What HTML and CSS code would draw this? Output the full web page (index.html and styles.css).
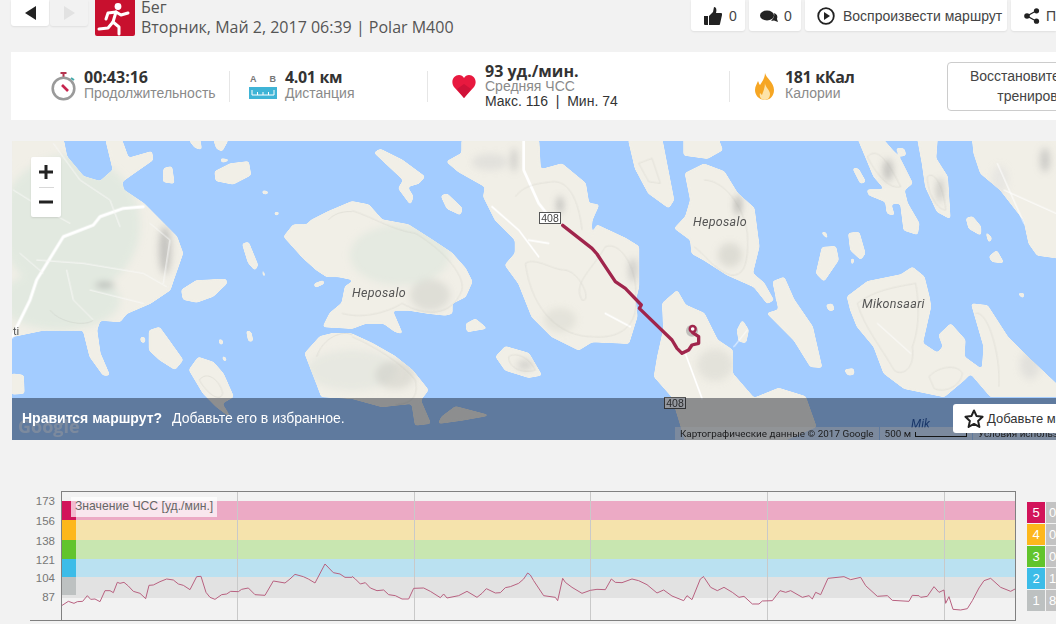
FILE: index.html
```html
<!DOCTYPE html>
<html lang="ru">
<head>
<meta charset="utf-8">
<title>Бег</title>
<link rel="stylesheet" href="styles.css">
</head>
<body>
<header class="top">
  <div class="pager">
    <button class="pager-btn"><svg width="11" height="14" viewBox="0 0 11 14"><path d="M11 0v14L0 7z" fill="#222"/></svg></button>
    <button class="pager-btn pager-off"><svg width="11" height="14" viewBox="0 0 11 14"><path d="M0 0v14l11-7z" fill="#e2e2e2"/></svg></button>
  </div>
  <div class="sport">
    <svg width="40" height="36" viewBox="0 0 40 36"><circle cx="23" cy="6.500" r="3.400" fill="#fff"/><g fill="none" stroke="#fff" stroke-width="3" stroke-linejoin="round" stroke-linecap="round"><path d="M21 12l-3 10 6 5v7"/><path d="M18 22l-5 6-9 1"/><path d="M11 19l2-6 8-1 5 3 7-2"/></g></svg>
  </div>
  <div class="title">
    <div>Бег</div>
    <div>Вторник, Май 2, 2017 06:39 | Polar M400</div>
  </div>
  <div class="actions">
    <button class="act act-like"><svg width="18" height="18" viewBox="0 0 18 18"><path d="M0 9h4v9H1a1 1 0 0 1-1-1zM5 9l4-4 1-5c2 0 3 2 2 6h5c1 0 1.500 1 1 2l-2 9c0 .6-.6 1-1 1H5z" fill="#222"/></svg>0</button>
    <button class="act act-comment"><svg width="18" height="12" viewBox="0 0 18 12"><ellipse cx="7" cy="5.500" rx="7" ry="5" fill="#222"/><path d="M14 3c3 1 4 3 3 6l1 3-4-1.500-3 .5c2-2 4-5 3-8z" fill="#222"/></svg>0</button>
    <button class="act act-play"><svg width="18" height="18" viewBox="0 0 18 18"><circle cx="9" cy="9" r="7.800" fill="none" stroke="#222" stroke-width="1.800"/><path d="M7 5l6 4-6 4z" fill="#222"/></svg>Воспроизвести маршрут</button>
    <button class="act act-share"><svg width="16" height="16" viewBox="0 0 16 16"><g fill="#222"><circle cx="3" cy="8" r="2.800"/><circle cx="12.500" cy="2.800" r="2.600"/><circle cx="12.500" cy="13.200" r="2.600"/></g><path d="M12.500 2.800L3 8l9.500 5.200" fill="none" stroke="#222" stroke-width="1.300"/></svg>Поделиться</button>
  </div>
</header>

<section class="stats">
  <div class="stat stat-time">
    <svg class="ico" width="25" height="29" viewBox="0 0 25 29"><rect x="9.500" y="0" width="6" height="2" fill="#b5344f"/><rect x="11.500" y="2" width="2" height="3" fill="#b5344f"/><circle cx="12.500" cy="16.500" r="10.800" fill="#fff" stroke="#9a9a9a" stroke-width="2.600"/><path d="M20 6l3 2" stroke="#4aa" stroke-width="2"/><path d="M11 13l6 6" stroke="#c7254e" stroke-width="2.600"/></svg>
    <div class="stat-text"><div class="big">00:43:16</div><div class="sub">Продолжительность</div></div>
  </div>
  <div class="stat stat-dist">
    <div class="ruler-wrap">
      <div class="ab"><span>A</span><span>B</span></div>
      <svg width="28" height="12" viewBox="0 0 28 12"><rect width="28" height="12" fill="#3fb4d6"/><path d="M3 3v5h22V3M8.500 5v3M14 5v3M19.500 5v3" fill="none" stroke="#fff" stroke-width="1"/></svg>
    </div>
    <div class="stat-text"><div class="big">4.01 км</div><div class="sub">Дистанция</div></div>
  </div>
  <div class="stat stat-hr">
    <svg class="ico" width="24" height="23" viewBox="0 0 24 23"><path d="M12 23L2 12C-2 6 2 0 7 0c2 0 4 1 5 3 1-2 3-3 5-3 5 0 9 6 5 12z" fill="#e8193f"/><path d="M12 23L5 14l7-5 7 5z" fill="#cf1238"/></svg>
    <div class="hr-text"><div class="big">93 уд./мин.</div><div class="sub">Средняя ЧСС</div><div class="minmax">Макс. 116 &nbsp;|&nbsp; Мин. 74</div></div>
  </div>
  <div class="stat stat-cal">
    <svg class="ico" width="21" height="27" viewBox="0 0 21 27"><path d="M11 0c1 5 9 9 9 17 0 6-4 10-9 10S1 23 1 17c0-4 2-6 3-9 1 2 1 3 2 4 2-3 5-7 5-12z" fill="#f6a623"/><path d="M11 10c0 4 5 7 5 11 0 3-2 6-5 6-4 0-6-3-5-7 1 1 2 2 2 2 1-3 3-7 3-12z" fill="#fde3a8"/></svg>
    <div class="stat-text"><div class="big">181 кКал</div><div class="sub">Калории</div></div>
  </div>
  <button class="restore">Восстановите карту<br>тренировки</button>
</section>

<section class="map">
  <svg class="map-art" width="1044" height="299" viewBox="12 141 1044 299">
    <defs>
      <filter id="soft" x="-2%" y="-2%" width="104%" height="104%" color-interpolation-filters="sRGB"><feGaussianBlur stdDeviation="1.500"/><feColorMatrix values="1 0 0 0 0 0 1 0 0 0 0 0 1 0 0 0 0 0 7 -3"/><feGaussianBlur stdDeviation=".4"/></filter>
      <filter id="hill" x="-50%" y="-50%" width="200%" height="200%"><feGaussianBlur stdDeviation="3.500"/></filter>
      <g id="land" stroke-width="4" stroke-linejoin="round">
      <g transform="translate(0 140) scale(.33333)">
        <path d="M36 0H190L200 50 250 110 300 125 340 90 330 50 318 0H365L385 55 455 35 458 60 400 100 365 125 370 150 430 190 480 240 530 290 548 340 520 420 510 450 450 490 380 520 360 545 300 540 290 570 300 640 328 705 310 705 270 650 250 570 130 570 36 590z"/>
        <path d="M492 85L515 80 522 130 490 125z"/>
        <path d="M645 95L690 72 745 65 752 105 700 132 648 122z"/>
        <path d="M788 152L805 156 800 162 788 160z"/>
        <path d="M824 218L836 216 834 225 824 224z"/>
        <path d="M728 312L745 307 773 375 765 390 745 368z"/>
        <path d="M787 388L796 408 790 408z"/>
        <path d="M545 450L590 422 678 418 680 430 640 468 590 486 550 478z"/>
        <path d="M943 432L970 422 972 430 946 442z"/>
        <path d="M448 572L478 562 500 592 548 660 525 688 480 660 448 630z"/>
        <path d="M422 592L434 592 434 608 424 606z"/>
        <path d="M740 572L753 577 758 603 746 603z"/>
        <path d="M657 597L668 602 667 613 660 612z"/>
        <path d="M668 648L678 655 678 664 670 660z"/>
        <path d="M568 690L595 652 640 667 670 702 700 770 665 790 690 830 650 800 610 760z"/>
        <path d="M36 702L70 706 72 760 36 762z"/>
        <path d="M568 0H600L604 28 585 22z"/>
        <path d="M642 0H684L666 33 650 25z"/>
        <path d="M662 56L688 60 666 67z"/>
      </g>
      <g transform="translate(352 140) scale(.33333)">
        <path d="M-204 290L-176 255-136 255-121 240-71 215 0 185 50 195 90 240 170 255 240 300 300 340 340 385 360 425 340 470 300 490 300 520 280 525 230 520 170 510 120 510 150 580 130 575 95 550 40 550 0 565-86 560-66 520-30 490-20 440 10 420-40 410-75 410-106 390-150 350z"/>
        <path d="M0 582L60 610 130 650 180 690 228 750 205 780 235 850 190 855 180 790 90 800 0 775-91 770-106 730-141 640-96 590-56 580z"/>
        <path d="M270 830L310 800 410 826 330 840 260 850z"/>
        <path d="M68 38L85 28 150 60 218 110 200 130 165 140 183 170 175 192 140 145 155 120z"/>
        <path d="M268 168L285 162 330 205 325 224 285 205z"/>
        <path d="M330 0H560L565 90 630 72 700 130 710 190 740 195 720 240 715 295 735 255 820 295 860 320 860 440 850 480 855 530 830 610 720 605 680 630 600 590 540 530 500 430 460 375 490 340 490 300 430 240 395 170 400 140 320 95 285 65 330 40z"/>
        <path d="M342 552L370 537 403 565 346 575z"/>
        <path d="M432 650L460 620 530 640 568 705 530 712 460 690z"/>
        <path d="M932 490L975 452 1000 495 1056 520 1096 600 1141 630 1141 700 1206 775 1280 745 1360 770 1392 860 1300 900 1000 900 960 770 907 710 917 650 935 570z"/>
        <path d="M830 0H930L965 180 950 203 890 160 850 85z"/>
      </g>
      <g transform="translate(704 140) scale(.33333)">
        <path d="M-60 -10H40L55 30 10 55-60 45z"/>
        <path d="M-56 100L0 72 60 95 100 160 150 205 165 320 145 400 180 430 208 480 190 490 150 440 70 405 0 360-36 340-40 300-88 265-55 230-40 180z"/>
        <path d="M207 425L240 412 270 480 325 560 353 682 320 680 270 600 220 550 190 520 225 510z"/>
        <path d="M100 570L115 542 133 570 125 608 105 603z"/>
        <path d="M337 400L355 322 395 320 403 360 360 423z"/>
        <path d="M434 280L465 277 483 340 470 358 440 330z"/>
        <path d="M352 277L365 277 371 296z"/>
        <path d="M441 357L450 357 445 376z"/>
        <path d="M367 495L385 492 390 510 375 511z"/>
        <path d="M422 690L448 686 450 703 432 705z"/>
        <path d="M460 -10H530L590 60 625 130 600 150 610 190 645 250 640 283 600 270 590 190 560 190 570 225 550 220 545 185 495 165 490 150 545 150 510 110z"/>
        <path d="M447 85L463 87 484 125 470 130z"/>
        <path d="M577 25L600 27 605 45 590 48z"/>
        <path d="M640 -10H700L695 55 730 110 738 235 700 215 665 140 655 70z"/>
        <path d="M805 -10H1070V355L1000 345 975 310 960 240 890 150 830 100 810 40z"/>
        <path d="M787 235L805 230 830 260 830 285 795 265z"/>
        <path d="M846 277L863 295 855 307z"/>
        <path d="M862 345L878 332 898 368 865 365 856 350z"/>
        <path d="M942 460L960 460 957 474z"/>
        <path d="M430 470L490 425 590 405 625 382 660 410 675 470 680 500 655 610 700 640 718 620 705 585 740 552 783 600 780 650 835 690 840 620 803 492 850 497 910 590 980 660 1070 745 1070 770 860 770 800 700 780 720 720 770 600 745 540 700 510 620 460 560 440 510z"/>
      </g>
      </g>
      <mask id="landmask" maskUnits="userSpaceOnUse" x="12" y="141" width="1044" height="299"><use href="#land" fill="#fff" stroke="#fff"/></mask>
    </defs>
    <rect x="12" y="141" width="1044" height="299" fill="#a3ccff"/>
    <use href="#land" fill="#f1efe7" stroke="#f1efe7" filter="url(#soft)"/>
    <g mask="url(#landmask)">
    <g filter="url(#hill)">
      <ellipse cx="70" cy="225" rx="70" ry="70" fill="#e2e9e0"/>
      <ellipse cx="60" cy="300" rx="60" ry="30" fill="#e2e9e0"/>
      <ellipse cx="165" cy="250" rx="6" ry="24" fill="#999" opacity=".5"/>
      <ellipse cx="105" cy="285" rx="10" ry="3" fill="#888" opacity=".5"/>
      <ellipse cx="400" cy="255" rx="50" ry="30" fill="#e3e9e0" opacity=".9"/>
      <ellipse cx="430" cy="295" rx="20" ry="16" fill="#c4c6be" opacity=".4"/>
      <ellipse cx="352" cy="370" rx="45" ry="20" fill="#e3e6de" opacity=".7"/>
      <ellipse cx="395" cy="375" rx="20" ry="14" fill="#c4c4bc" opacity=".4"/>
      <ellipse cx="560" cy="205" rx="3" ry="9" fill="#999" opacity=".6"/>
      <ellipse cx="490" cy="162" rx="18" ry="8" fill="#ccc" opacity=".4"/>
      <ellipse cx="514" cy="160" rx="3" ry="12" fill="#aaa" opacity=".5"/>
      <ellipse cx="633" cy="270" rx="4" ry="12" fill="#aaa" opacity=".5"/>
      <ellipse cx="560" cy="320" rx="16" ry="12" fill="#d5d5cd" opacity=".45"/>
      <ellipse cx="525" cy="365" rx="8" ry="5" fill="#aaa" opacity=".4"/>
      <ellipse cx="738" cy="205" rx="3" ry="10" fill="#888" opacity=".6"/>
      <ellipse cx="730" cy="255" rx="12" ry="12" fill="#c0c0b8" opacity=".4"/>
      <ellipse cx="888" cy="170" rx="5" ry="11" fill="#999" opacity=".5"/>
      <ellipse cx="940" cy="190" rx="3" ry="12" fill="#999" opacity=".5"/>
      <ellipse cx="1045" cy="160" rx="5" ry="12" fill="#aaa" opacity=".5"/>
      <ellipse cx="1000" cy="180" rx="8" ry="14" fill="#ddd" opacity=".5"/>
      <ellipse cx="715" cy="365" rx="18" ry="16" fill="#d0d0c8" opacity=".4"/>
      <ellipse cx="1030" cy="365" rx="10" ry="14" fill="#ccc" opacity=".4"/>
    </g>
    </g>
    <g fill="none" stroke="#fff" stroke-linecap="round" stroke-linejoin="round">
      <g transform="translate(0 140) scale(.33333)">
        <path d="M36 590L90 480 110 420 190 290 280 255 300 230 370 205 430 200" stroke-width="9"/>
        <path d="M160 10L240 120 330 180 360 260M110 360L250 370 430 400 500 440M200 390L220 480 280 540M270 450L430 490M40 150L120 200 210 250M60 340L130 400M450 250L510 300 490 430" stroke-width="3" stroke="#f8f8f6"/>
      </g>
      <g transform="translate(352 140) scale(.33333)">
        <path d="M515 0L515 90 560 190 600 240" stroke-width="8"/>
        <path d="M420 200L500 270 560 350M530 300L590 310M760 520L835 560M1000 640L1050 775" stroke-width="5"/>
      </g>
      <g transform="translate(704 140) scale(.33333)">
        <path d="M90 620L130 570M880 70L960 250M900 150L1056 220M520 550L620 640" stroke-width="3"/>
      </g>
    </g>
    <g fill="none" stroke="#a8a89e" stroke-width=".7" opacity=".8">
      <g transform="translate(352 140) scale(.33333)">
        <path d="M0 212C60 230 120 270 190 280 260 320 340 400 330 450 300 530 220 530 150 490 120 510 40 540-30 520"/>
        <path d="M0 590C70 620 150 670 190 720 200 770 180 790 130 795"/>
        <path d="M520 370C550 350 600 390 640 390 690 400 720 490 690 480 660 430 720 390 760 320 810 300 860 400 850 470 860 530 830 600 720 590 630 590 540 520 520 370z"/>
        <path d="M490 170C520 130 570 130 600 125 650 120 680 180 690 270"/>
        <path d="M860 70L900 55 925 130 890 125z"/>
        <path d="M470 650C490 635 530 650 550 690 520 700 470 690 470 650z"/>
      </g>
      <g transform="translate(704 140) scale(.33333)">
        <path d="M0 120C60 120 120 200 130 280 135 370 120 410 80 405 30 390 0 340-30 320"/>
        <path d="M460 490C510 450 580 440 635 430 650 520 640 580 625 620 635 690 590 710 570 690 530 620 480 560 460 490z"/>
        <path d="M675 710C700 680 760 670 775 700 770 740 720 760 690 745z"/>
        <path d="M815 520C850 510 890 640 885 740"/>
        <path d="M490 50C520 20 550 60 590 140 550 150 510 90 490 50zM670 110C690 90 720 140 725 210 700 210 670 160 670 110z"/>
      </g>
      <g transform="translate(0 140) scale(.33333)">
        <path d="M985 240C1010 210 1056 215 1056 215M950 650C970 590 1030 570 1056 585M598 720C620 690 660 720 668 760 660 790 620 760 598 720zM150 510C180 550 260 560 280 540"/>
      </g>
    </g>
    <g transform="translate(352 140) scale(.33333)" fill="none" stroke="#a0254c" stroke-linejoin="round" stroke-linecap="round">
      <circle cx="1020" cy="572" r="18" fill="#999" stroke="none" opacity=".55"/>
      <path d="M632 256L720 325 735 342 750 365 790 425 820 445 868 495 862 505 960 600 975 625 990 640 1010 630 1020 615 1040 610 1040 590 1022 578" stroke-width="10"/>
      <circle cx="1022" cy="567" r="9" fill="#fff" stroke-width="7"/>
    </g>
    <g class="shield">
      <rect x="539.500" y="212.500" width="21" height="11"/>
      <rect x="664.500" y="397.500" width="21" height="11"/>
    </g>
    <text class="shield-num" x="550" y="221.500">408</text>
    <text class="shield-num" x="675" y="406.500">408</text>
    <text class="place" x="352" y="297">Heposalo</text>
    <text class="place" x="693" y="226">Heposalo</text>
    <text class="place" x="862" y="308">Mikonsaari</text>
    <text class="place-edge" x="13" y="335">ti</text>
    <text class="water" x="911" y="428">Mik</text>
    <text class="gg" x="18" y="433">Google</text>
  </svg>
  <div class="zoom">
    <button class="zoom-btn"><svg width="14" height="14" viewBox="0 0 14 14"><path d="M5.500 0h3v5.500H14v3H8.500V14h-3V8.500H0v-3h5.500z" fill="#222"/></svg></button>
    <span class="zoom-sep"></span>
    <button class="zoom-btn"><svg width="14" height="14" viewBox="0 0 14 14"><path d="M0 5.500h14v3H0z" fill="#222"/></svg></button>
  </div>
  <div class="attrib">
    <span class="attrib-item">Картографические данные © 2017 Google</span>
    <span class="attrib-item scale">500 м<i class="scale-bar"></i></span>
    <span class="attrib-item">Условия использования</span>
  </div>
  <div class="tint"></div>
  <div class="cta">
    <b>Нравится маршрут?</b><span>Добавьте его в избранное.</span>
  </div>
  <button class="fav"><svg width="20" height="19" viewBox="0 0 20 19"><path d="M10 1.500l2.600 5.600 6 .7-4.500 4.100 1.300 6L10 14.900l-5.400 3 1.300-6L1.400 7.800l6-.7z" fill="none" stroke="#222" stroke-width="2" stroke-linejoin="round"/></svg><span class="fav-text">Добавьте маршрут</span></button>
</section>

<section class="chart">
  <div class="yaxis">
    <span class="y y1">173</span><span class="y y2">156</span><span class="y y3">138</span><span class="y y1">121</span><span class="y y4">104</span><span class="y y1">87</span>
  </div>
  <div class="plot">
    <div class="band b5"><i class="sw"></i></div>
    <div class="band b4"><i class="sw"></i></div>
    <div class="band b3"><i class="sw"></i></div>
    <div class="band b2"><i class="sw"></i></div>
    <div class="band b1"><i class="sw"></i></div>
    <svg class="plot-art" width="953" height="128" viewBox="62 492 953 128">
      <path d="M237.500 492V620M414.500 492V620M590.500 492V620M767.500 492V620M944.500 492V620" stroke="#c9c9c9" stroke-width="1" fill="none"/>
      <g fill="none" stroke="#b8607f" stroke-width="3" stroke-linejoin="round">
        <path transform="translate(0 484) scale(.33333)" d="M185 365L205 352 222 358 232 353 248 352 262 335 272 346 285 345 300 353 315 320 330 320 340 326 352 295 360 298 372 295 385 306 400 322 420 328 437 344 447 304 460 303 480 293 500 285 520 288 535 300 550 304 570 317 590 278 603 277 618 325 630 340 645 346 665 332 680 330 692 322 715 323 725 316 745 312 765 332 795 334 820 291 855 297 870 285 885 271 910 278 925 285 945 297 975 240 1000 266 1020 270 1035 280 1056 280"/>
        <path transform="translate(352 484) scale(.33333)" d="M0 277L10 285 25 300 40 296 55 312 75 320 95 318 110 332 130 335 150 345 170 345 185 313 215 312 235 322 265 341 275 330 285 342 320 335 345 322 375 340 390 328 403 314 430 327 445 326 460 311 475 308 500 298 515 285 527 267 535 273 545 290 575 335 610 340 617 350 632 283 640 295 660 310 690 328 715 319 735 316 760 317 778 285 790 295 810 296 840 285 860 290 885 302 915 327 935 318 960 336 995 350 1005 335 1020 347 1045 285 1056 277"/>
        <path transform="translate(704 484) scale(.33333)" d="M0 280L20 310 40 320 60 310 85 325 105 340 120 337 145 360 165 360 175 351 205 350 228 320 245 325 260 320 295 340 315 335 325 345 335 325 350 332 372 283 420 278 440 287 470 280 485 305 520 337 550 335 565 349 615 352 625 334 645 335 650 340 670 337 690 308 705 325 720 318 725 358 735 338 747 376 770 378 790 374 805 350 825 312 840 290 860 283 890 310 920 322 935 314"/>
      </g>
    </svg>
    <div class="plot-label">Значение ЧСС [уд./мин.]</div>
  </div>
  <div class="legend">
    <span class="key k5">5</span><span class="val">0%</span>
    <span class="key k4">4</span><span class="val">0%</span>
    <span class="key k3">3</span><span class="val">0%</span>
    <span class="key k2">2</span><span class="val">12%</span>
    <span class="key k1">1</span><span class="val">85%</span>
  </div>
</section>
</body>
</html>
```
FILE: styles.css
```css
* { box-sizing: border-box; }
html, body { margin: 0; height: 624px; overflow: hidden; }
body { width: 1056px; background: #f2f2f2; font-family: "Liberation Sans", Arial, sans-serif; color: #333; }
button { font: inherit; border: 0; padding: 0; background: none; color: inherit; }

.top { display: flex; align-items: flex-start; height: 52px; padding-left: 11px; }
.pager { display: flex; gap: 1px; height: 26px; }
.pager-btn { width: 38px; height: 26px; background: #fff; border-radius: 0 0 3px 3px; display: flex; align-items: center; justify-content: center; box-shadow: 0 1px 2px rgba(0,0,0,.08); }
.pager-off { background: #f2f2f2; }
.sport { width: 40px; height: 36px; margin-left: 7px; background: #c8102e; border-radius: 0 0 2px 2px; }
.title { margin: -3px 0 0 6px; font: 16px/20px "Open Sans", sans-serif; color: #555; }
.actions { margin-left: auto; display: flex; gap: 4px; width: 365px; flex: none; }
.act { flex: none; height: 31px; background: #fff; border-radius: 0 0 3px 3px; display: flex; align-items: center; box-shadow: 0 1px 2px rgba(0,0,0,.08); font: 14px "Liberation Sans", sans-serif; color: #444; white-space: nowrap; }
.act svg { flex: none; }
.act-like { width: 54px; padding-left: 13px; gap: 7px; }
.act-comment { width: 52px; padding-left: 11px; gap: 6px; }
.act-play { width: 202px; padding-left: 12px; gap: 8px; }
.act-share { width: 45px; padding-left: 13px; gap: 6px; overflow: hidden; border-radius: 0 0 0 3px; }

.stats { margin-left: 11px; width: 1045px; height: 68px; background: #fff; display: flex; align-items: center; overflow: hidden; }
.stat { height: 31px; display: flex; align-items: center; border-right: 1px solid #e6e6e6; flex: none; }
.stat-text { margin-top: -2px; }
.stat-time { width: 219px; padding-left: 40px; gap: 8px; }
.stat-dist { width: 198px; padding-left: 19px; gap: 8px; }
.stat-hr { width: 302px; padding-left: 24px; gap: 9px; }
.stat-cal { width: 218px; padding-left: 24px; gap: 10px; border-right: 0; }
.big { font: 700 16px/17px "Open Sans", sans-serif; color: #333; white-space: nowrap; }
.stat-dist .big, .stat-cal .big { letter-spacing: -.35px; }
.sub { font-size: 14px; line-height: 15px; color: #8a8a8a; white-space: nowrap; }
.hr-text { margin-top: -1px; }
.hr-text .big { line-height: 16px; }
.minmax { font-size: 14px; line-height: 15px; color: #333; white-space: nowrap; }
.ruler-wrap { width: 28px; display: flex; flex-direction: column; gap: 3px; margin-top: 1px; flex: none; }
.ruler-wrap svg { display: block; }
.ab { display: flex; justify-content: space-between; font-size: 9px; line-height: 10px; font-weight: 700; color: #777; padding: 0 1px; }
.restore { flex: none; width: 175px; height: 49px; margin-left: -1px; background: #fff; border: 1px solid #ccc; border-radius: 4px; font-size: 14px; line-height: 20px; color: #444; white-space: nowrap; }

.map { position: relative; margin: 21px 0 0 12px; width: 1044px; height: 299px; overflow: hidden; }
.map-art { display: block; }
.shield rect { fill: #fff; stroke: #555; stroke-width: 1; }
.shield-num { font: 10.500px "Liberation Sans", sans-serif; text-anchor: middle; fill: #444; }
.place { font: italic 12.500px "Roboto", sans-serif; fill: #555; letter-spacing: .3px; }
.place-edge { font: 11px "Roboto", sans-serif; fill: #555; }
.water { font: italic 12px "Roboto", sans-serif; fill: #2a5aa8; }
.gg { font: 700 18px "Open Sans", sans-serif; fill: #fff; opacity: .55; }
.zoom { position: absolute; left: 19px; top: 16px; width: 30px; height: 60px; background: #fff; border-radius: 2px; display: flex; flex-direction: column; align-items: center; box-shadow: 0 1px 2px rgba(0,0,0,.1); }
.zoom-btn { height: 30px; width: 30px; flex: none; display: flex; align-items: center; justify-content: center; }
.zoom-sep { width: 15px; height: 1px; background: #d8d8d8; flex: none; margin-bottom: -1px; }
.attrib { position: absolute; left: 663px; bottom: 0; height: 13px; display: flex; gap: 1px; font: 9.900px/13px "Roboto", sans-serif; color: #333; white-space: nowrap; }
.attrib-item { background: rgba(255,255,255,.55); padding: 0 5px; }
.scale { display: flex; align-items: center; gap: 4px; }
.scale-bar { width: 52px; height: 5px; border: 1px solid #222; border-top: 0; display: block; margin-top: 2px; }
.tint { position: absolute; left: 0; right: 0; bottom: 0; height: 42px; background: #95989e; mix-blend-mode: multiply; }
.cta { position: absolute; left: 10px; bottom: 13px; display: flex; gap: 10px; font-size: 14px; line-height: 18px; color: #fff; white-space: nowrap; }
.fav { position: absolute; left: 941px; top: 263px; width: 103px; height: 29px; background: #fff; border-radius: 3px 0 0 3px; display: flex; align-items: center; gap: 3px; padding-left: 11px; font: 13px "Liberation Sans", sans-serif; color: #333; white-space: nowrap; overflow: hidden; }
.fav svg { flex: none; }

.chart { display: flex; align-items: flex-start; margin: 51px 0 0 30px; }
.yaxis { width: 31px; height: 130px; flex: none; border-bottom: 1px solid #808080; padding-right: 6px; display: flex; flex-direction: column; align-items: flex-end; font-size: 11.500px; color: #777; }
.y { display: flex; align-items: center; }
.y1 { height: 19px; }
.y2 { height: 21px; }
.y3 { height: 19px; }
.y4 { height: 18px; }
.plot { position: relative; width: 955px; height: 130px; flex: none; border: 1px solid #808080; padding-top: 9px; }
.band { display: flex; }
.b5 { height: 19px; background: #ecaac5; }
.b4 { height: 20px; background: #f5e3ac; }
.b3 { height: 19px; background: #c8e6b0; }
.b2 { height: 18px; background: #bae1f1; }
.b1 { height: 21px; background: #e2e2e2; }
.sw { display: block; width: 14px; }
.b5 .sw { background: #d2145a; }
.b4 .sw { background: #fdb71c; }
.b3 .sw { background: #62c42c; }
.b2 .sw { background: #3cbce8; }
.b1 .sw { background: #bdc1c1; height: 18px; }
.plot-art { position: absolute; left: 0; top: 0; }
.plot-label { position: absolute; left: 9px; top: 5px; height: 20px; padding: 0 4px; background: rgba(255,255,255,.7); font-size: 12.200px; line-height: 18px; color: #666; white-space: nowrap; }
.legend { margin: 11px 0 0 11px; display: grid; grid-template-columns: 18px 10px; grid-auto-rows: 21px; gap: 1px; font-size: 13px; color: #fff; text-align: center; flex: none; overflow: hidden; }
.key, .val { line-height: 21px; }
.val { background: #c3c3c3; text-align: left; padding-left: 3px; overflow: hidden; white-space: nowrap; }
.k5 { background: #d2145a; }
.k4 { background: #fdb71c; }
.k3 { background: #62c42c; }
.k2 { background: #3cbce8; }
.k1 { background: #bdc1c1; }
```
